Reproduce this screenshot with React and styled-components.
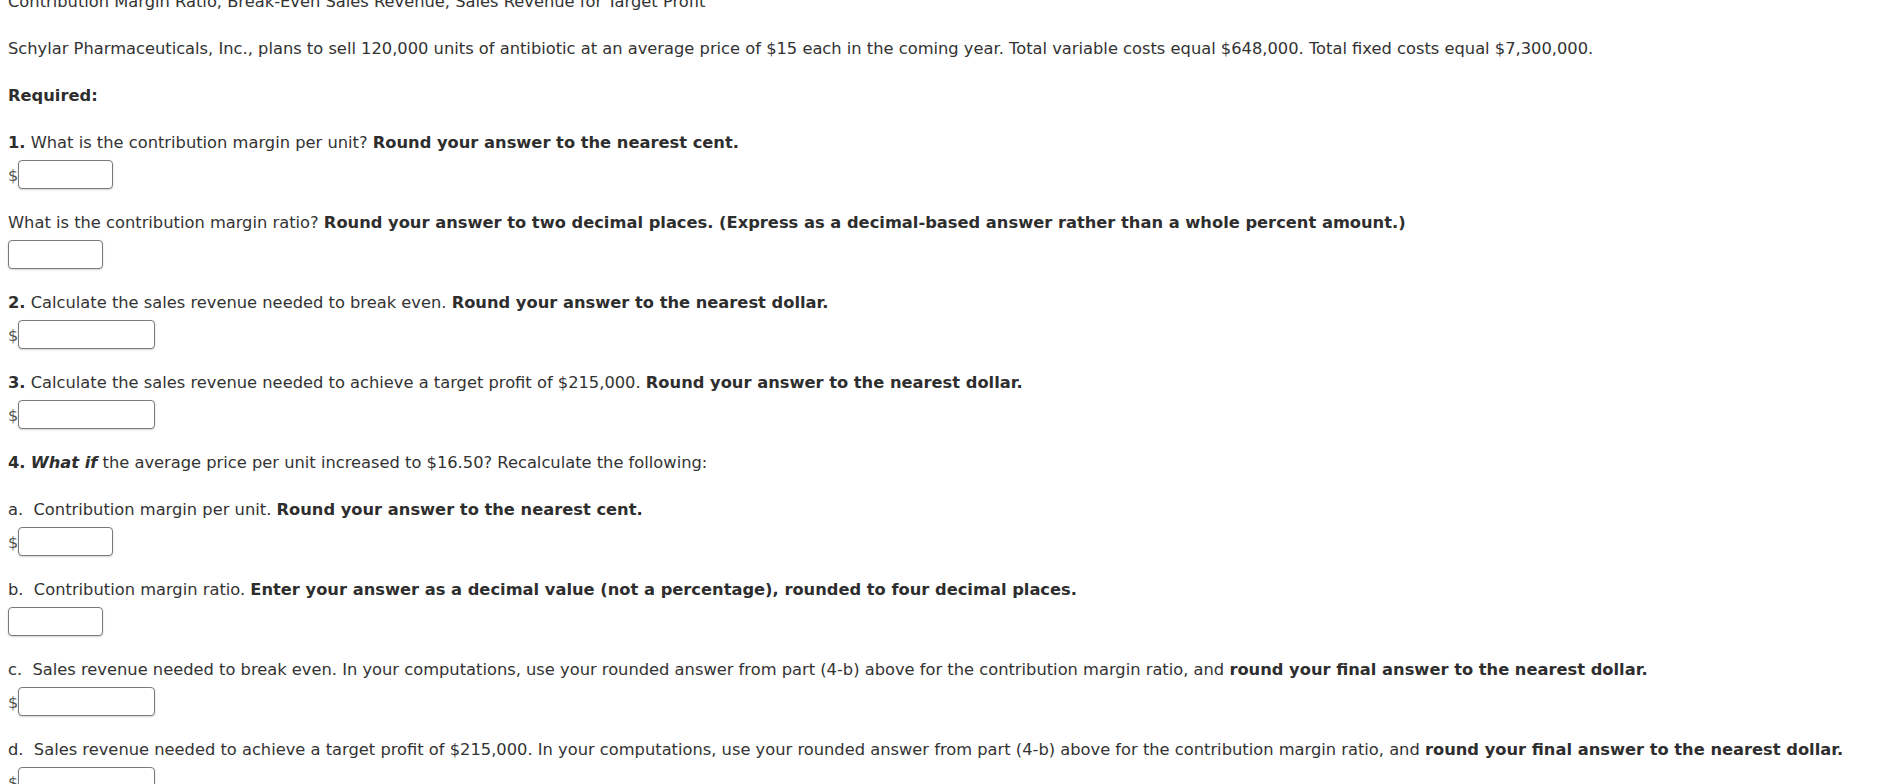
import React from "react";
import styled, { createGlobalStyle } from "styled-components";

const GlobalStyle = createGlobalStyle`
  html, body {
    margin: 0;
    padding: 0;
    background: #ffffff;
  }
  body {
    font-family: "DejaVu Sans", Verdana, sans-serif;
    font-size: 16.3px;
    color: #333333;
  }
`;

const Page = styled.main`
  display: flex;
  flex-direction: column;
  padding: 0 8px;
  margin-top: -8px;
`;

const Block = styled.section`
  display: flex;
  flex-direction: column;
  gap: 7px;
  margin-bottom: ${(p) => (p.$hasInput ? "24px" : "27px")};
`;

const Text = styled.p`
  margin: 0;
  line-height: 20px;
  font-size: 16.3px;
  white-space: nowrap;
  color: #333333;
`;

const Strong = styled.strong`
  font-weight: bold;
  color: #2e2e2e;
`;

const StrongItalic = styled.strong`
  font-weight: bold;
  font-style: italic;
  color: #2e2e2e;
`;

const InputRow = styled.div`
  display: flex;
  align-items: center;
  height: 29px;
`;

const Dollar = styled.span`
  width: 10px;
  font-size: 16px;
  line-height: 20px;
  color: #555555;
  padding-top: 3px;
`;

const Field = styled.input`
  box-sizing: border-box;
  width: ${(p) => p.$w}px;
  height: 29px;
  margin: 0;
  padding: 2px 4px;
  border: 1px solid #7a7a7a;
  border-radius: 4px;
  background: #ffffff;
  box-shadow: 0 1px 2px rgba(0, 0, 0, 0.18);
  font-family: "DejaVu Sans", Verdana, sans-serif;
  font-size: 16px;
  outline: none;
`;

function Answer({ dollar = true, width = 95 }) {
  return (
    <InputRow>
      {dollar && <Dollar>$</Dollar>}
      <Field type="text" $w={width} aria-label="answer" />
    </InputRow>
  );
}

export default function App() {
  return (
    <>
      <GlobalStyle />
      <Page>
        <Block>
          <Text>Contribution Margin Ratio, Break-Even Sales Revenue, Sales Revenue for Target Profit</Text>
        </Block>
        <Block>
          <Text>
            Schylar Pharmaceuticals, Inc., plans to sell 120,000 units of antibiotic at an average price of $15 each in the coming year. Total variable costs equal $648,000. Total fixed costs equal $7,300,000.
          </Text>
        </Block>
        <Block>
          <Text>
            <Strong>Required:</Strong>
          </Text>
        </Block>
        <Block $hasInput>
          <Text>
            <Strong>1.</Strong> What is the contribution margin per unit? <Strong>Round your answer to the nearest cent.</Strong>
          </Text>
          <Answer width={95} />
        </Block>
        <Block $hasInput>
          <Text>
            What is the contribution margin ratio? <Strong>Round your answer to two decimal places. (Express as a decimal-based answer rather than a whole percent amount.)</Strong>
          </Text>
          <Answer dollar={false} width={95} />
        </Block>
        <Block $hasInput>
          <Text>
            <Strong>2.</Strong> Calculate the sales revenue needed to break even. <Strong>Round your answer to the nearest dollar.</Strong>
          </Text>
          <Answer width={137} />
        </Block>
        <Block $hasInput>
          <Text>
            <Strong>3.</Strong> Calculate the sales revenue needed to achieve a target profit of $215,000. <Strong>Round your answer to the nearest dollar.</Strong>
          </Text>
          <Answer width={137} />
        </Block>
        <Block>
          <Text>
            <Strong>4.</Strong> <StrongItalic>What if</StrongItalic> the average price per unit increased to $16.50? Recalculate the following:
          </Text>
        </Block>
        <Block $hasInput>
          <Text>
            a.&nbsp; Contribution margin per unit. <Strong>Round your answer to the nearest cent.</Strong>
          </Text>
          <Answer width={95} />
        </Block>
        <Block $hasInput>
          <Text>
            b.&nbsp; Contribution margin ratio. <Strong>Enter your answer as a decimal value (not a percentage), rounded to four decimal places.</Strong>
          </Text>
          <Answer dollar={false} width={95} />
        </Block>
        <Block $hasInput>
          <Text>
            c.&nbsp; Sales revenue needed to break even. In your computations, use your rounded answer from part (4-b) above for the contribution margin ratio, and <Strong>round your final answer to the nearest dollar.</Strong>
          </Text>
          <Answer width={137} />
        </Block>
        <Block $hasInput>
          <Text>
            d.&nbsp; Sales revenue needed to achieve a target profit of $215,000. In your computations, use your rounded answer from part (4-b) above for the contribution margin ratio, and <Strong>round your final answer to the nearest dollar.</Strong>
          </Text>
          <Answer width={137} />
        </Block>
      </Page>
    </>
  );
}
